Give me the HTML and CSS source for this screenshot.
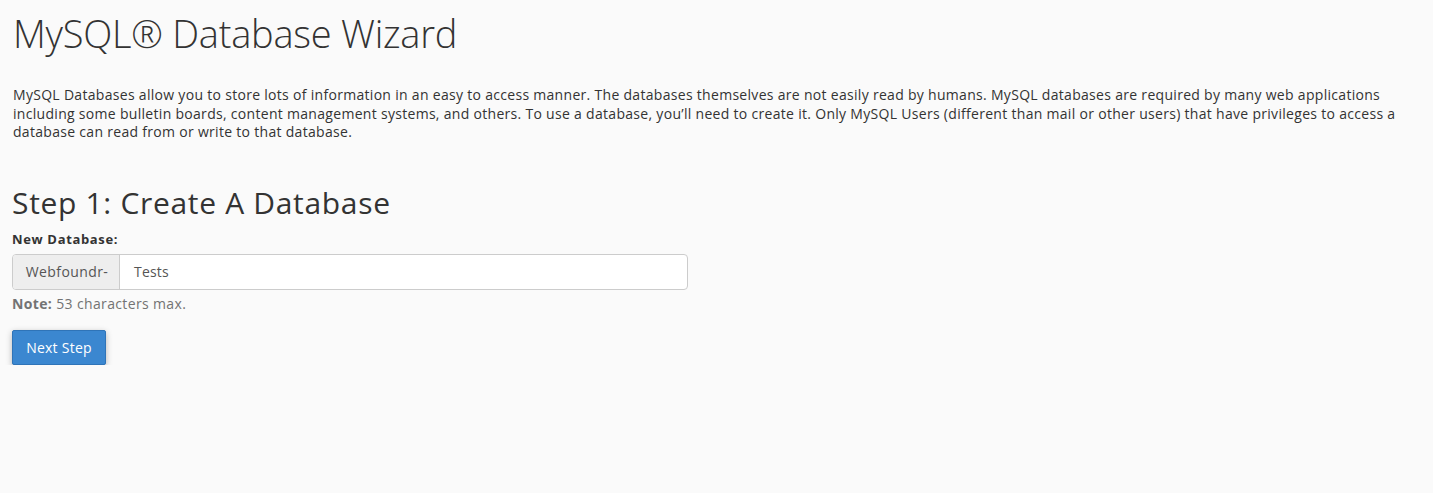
FILE: index.html
```html
<!DOCTYPE html>
<html>
<head>
<meta charset="utf-8">
<link rel="stylesheet" href="styles.css">
</head>
<body>
<div class="page">
  <h1 class="title">MySQL® Database Wizard</h1>
  <p class="desc">MySQL Databases allow you to store lots of information in an easy to access manner. The databases themselves are not easily read by humans. MySQL databases are required by many web applications including some bulletin boards, content management systems, and others. To use a database, you’ll need to create it. Only MySQL Users (different than mail or other users) that have privileges to access a database can read from or write to that database.</p>
  <h2 class="step">Step 1: Create A Database</h2>
  <label class="label">New Database:</label>
  <div class="input-group">
    <span class="addon">Webfoundr-</span>
    <span class="field">Tests</span>
  </div>
  <div class="note"><b>Note:</b> 53 characters max.</div>
  <button class="btn">Next Step</button>
</div>
</body>
</html>
```
FILE: styles.css
```css
html, body { margin: 0; padding: 0; background: #fafafa; }
body { font-family: "Open Sans", sans-serif; color: #333; }
.page { padding: 0 12px; }
.title { font-weight: 300; font-size: 38px; margin: 0 0 0 1px; padding-top: 11px; line-height: 44px; color: #333; letter-spacing: -0.25px; }
.desc { font-size: 14px; line-height: 18.5px; margin: 31px 0 0 1px; letter-spacing: 0.3px; }
.step { font-weight: 400; font-size: 30px; line-height: 36px; margin: 43px 0 0; color: #333; letter-spacing: 0.68px; }
.label { display: block; font-weight: 700; font-size: 13px; line-height: 18px; margin-top: 9px; letter-spacing: 0.65px; }
.input-group { display: flex; width: 676px; height: 36px; box-sizing: border-box; border: 1px solid #ccc; border-radius: 4px; margin-top: 6px; background: #fff; }
.addon { width: 107px; box-sizing: border-box; background: #eee; border-right: 1px solid #ccc; font-size: 14px; color: #555; display: flex; align-items: center; justify-content: center; border-radius: 3px 0 0 3px; letter-spacing: 0.4px; padding-left: 2px; }
.field { flex: 1; padding-left: 14px; font-size: 14px; color: #555; display: flex; align-items: center; letter-spacing: 0.2px; }
.note { font-size: 14px; color: #737373; margin-top: 4px; line-height: 20px; letter-spacing: 0.36px; }
.note b { font-weight: 700; }
.btn { display: block; margin-top: 16px; width: 94px; height: 35px; background: #3b87d0; color: #fff; border: 1px solid #2f74b8; border-radius: 2px; font-family: "Open Sans", sans-serif; font-size: 14px; box-shadow: 0 2px 6px rgba(0,0,0,0.28); padding: 0; letter-spacing: 0.25px; }
```
